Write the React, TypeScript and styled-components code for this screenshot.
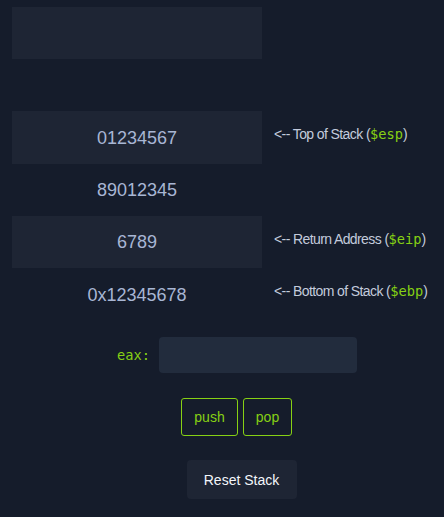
import React from 'react';
import styled, { createGlobalStyle } from 'styled-components';

const GlobalStyle = createGlobalStyle`
	html,
	body {
		margin: 0;
		padding: 0;
		background: #151c2b;
	}
	body {
		font-family: 'Liberation Sans', Arial, sans-serif;
	}
`;

const Page = styled.div`
	width: 444px;
	min-height: 517px;
	padding-top: 7px;
	box-sizing: border-box;
	background: #151c2b;
`;

const Stack = styled.div`
	display: flex;
	flex-direction: column;
	padding-left: 12px;
`;

const Row = styled.div`
	display: flex;
	align-items: center;
	height: 52.2px;
`;

const Cell = styled.div<{ filled?: boolean }>`
	width: 250px;
	height: 100%;
	display: flex;
	align-items: center;
	justify-content: center;
	padding-top: 2px;
	box-sizing: border-box;
	background: ${({ filled }) => (filled ? '#1e2534' : 'transparent')};
	color: #a8b6d4;
	font-size: 18px;
`;

const Pointer = styled.span`
	margin-left: 12px;
	margin-top: -6px;
	color: #c3cbdc;
	font-size: 14px;
	letter-spacing: -0.6px;
	white-space: nowrap;
`;

const Reg = styled.code`
	font-family: 'DejaVu Sans Mono', 'Liberation Mono', monospace;
	color: #86d014;
	font-size: 13.7px;
	letter-spacing: 0;
`;

const Controls = styled.div`
	display: flex;
	flex-direction: column;
	align-items: center;
	padding-left: 30px;
	padding-top: 17px;
`;

const InputRow = styled.div`
	display: flex;
	align-items: center;
	gap: 9px;
`;

const RegLabel = styled.label`
	font-family: 'DejaVu Sans Mono', 'Liberation Mono', monospace;
	color: #86d014;
	font-size: 13.7px;
	width: 33px;
`;

const Field = styled.input`
	width: 198px;
	height: 36px;
	box-sizing: border-box;
	border: none;
	border-radius: 4px;
	background: #222c3d;
	color: #c3cbdc;
	outline: none;
`;

const ButtonRow = styled.div`
	display: flex;
	gap: 5px;
	margin-top: 25px;
	margin-left: -1px;
`;

const OpButton = styled.button<{ w: number }>`
	width: ${({ w }) => w}px;
	height: 38px;
	box-sizing: border-box;
	background: transparent;
	border: 1px solid #86d014;
	border-radius: 3px;
	color: #86d014;
	font-family: 'Liberation Sans', Arial, sans-serif;
	font-size: 14px;
	cursor: pointer;
`;

const ResetButton = styled.button`
	margin-top: 24px;
	margin-left: 9px;
	width: 110px;
	height: 39px;
	border: none;
	border-radius: 4px;
	background: #1e2534;
	color: #f4f6fa;
	font-family: 'Liberation Sans', Arial, sans-serif;
	font-size: 14px;
	cursor: pointer;
`;

type Slot = { value: string; filled: boolean; note?: string; reg?: string };

const slots: Slot[] = [
	{ value: '', filled: true },
	{ value: '', filled: false },
	{ value: '01234567', filled: true, note: 'Top of Stack', reg: '$esp' },
	{ value: '89012345', filled: false },
	{ value: '6789', filled: true, note: 'Return Address', reg: '$eip' },
	{ value: '0x12345678', filled: false, note: 'Bottom of Stack', reg: '$ebp' },
];

export default function App() {
	return (
		<Page>
			<GlobalStyle />
			<Stack>
				{slots.map((s, i) => (
					<Row key={i}>
						<Cell filled={s.filled}>{s.value}</Cell>
						{s.note && (
							<Pointer>
								&lt;-- {s.note} (<Reg>{s.reg}</Reg>)
							</Pointer>
						)}
					</Row>
				))}
			</Stack>
			<Controls>
				<InputRow>
					<RegLabel>eax:</RegLabel>
					<Field />
				</InputRow>
				<ButtonRow>
					<OpButton w={57}>push</OpButton>
					<OpButton w={49}>pop</OpButton>
				</ButtonRow>
				<ResetButton>Reset Stack</ResetButton>
			</Controls>
		</Page>
	);
}
